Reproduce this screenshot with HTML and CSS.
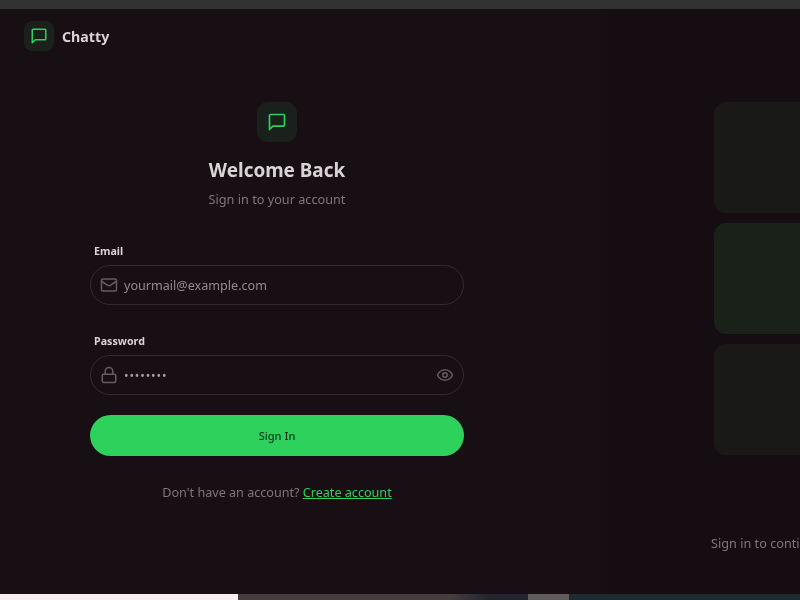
FILE: index.html
```html
<!DOCTYPE html>
<html lang="en">
<head>
  <meta charset="UTF-8">
  <title>Chatty</title>
  <link rel="stylesheet" href="styles.css">
</head>
<body>

  <!-- Browser strip on top -->
  <div class="strip-top"></div>

  <div class="app">
    <!-- Navbar -->
    <div class="navbar">
      <div class="logo-box small">
        <svg class="icon-green" width="18" height="18" viewBox="0 0 24 24"><path d="M21 16a1 1 0 0 1-1 1H7l-4 4V4a1 1 0 0 1 1-1h16a1 1 0 0 1 1 1z"/></svg>
      </div>
      <span class="brand">Chatty</span>
    </div>

    <!-- Login column -->
    <div class="login-col">
      <div class="login-head">
        <div class="logo-box">
          <svg class="icon-green" width="20" height="20" viewBox="0 0 24 24"><path d="M21 16a1 1 0 0 1-1 1H7l-4 4V4a1 1 0 0 1 1-1h16a1 1 0 0 1 1 1z"/></svg>
        </div>
        <h1>Welcome Back</h1>
        <p>Sign in to your account</p>
      </div>

      <form class="login-form">
        <label class="field-label">Email</label>
        <div class="field">
          <svg class="icon-gray" width="18" height="18" viewBox="0 0 24 24"><rect x="2" y="4" width="20" height="16" rx="2"/><path d="m22 7-8.97 5.7a1.94 1.94 0 0 1-2.06 0L2 7"/></svg>
          <span class="field-text">yourmail@example.com</span>
        </div>

        <label class="field-label second">Password</label>
        <div class="field">
          <svg class="icon-gray" width="18" height="18" viewBox="0 0 24 24"><rect x="3" y="11" width="18" height="11" rx="2"/><path d="M7 11V7a5 5 0 0 1 10 0v4"/></svg>
          <span class="field-dots">••••••••</span>
          <svg class="icon-gray eye" width="18" height="18" viewBox="0 0 24 24"><path d="M2 12s3-7 10-7 10 7 10 7-3 7-10 7-10-7-10-7Z"/><circle cx="12" cy="12" r="3"/></svg>
        </div>

        <button class="btn-signin" type="button">Sign In</button>
      </form>

      <p class="signup">Don't have an account? <a href="#">Create account</a></p>
    </div>

    <!-- Right column with the pattern -->
    <div class="side-col">
      <div class="pattern">
        <div class="tile"></div>
        <div class="tile tile-green"></div>
        <div class="tile"></div>
      </div>
      <p class="side-text">Sign in to continue</p>
    </div>
  </div>

  <!-- Browser strip at the bottom -->
  <div class="strip-bottom">
    <div class="seg-white"></div>
    <div class="seg-brown"></div>
    <div class="seg-blue"></div>
    <div class="seg-gray"></div>
    <div class="seg-dark"></div>
  </div>

</body>
</html>
```
FILE: styles.css
```css
html, body {
  height: 100%;
}

body {
  margin: 0;
  font-family: "Noto Sans", "Open Sans", sans-serif;
  background: #170f13;
  display: flex;
  flex-direction: column;
  overflow: hidden;
}

.strip-top {
  height: 9px;
  background: #333232;
}

/* The reference is a soft video frame, hence the slight blur */
.app {
  flex: 1;
  display: flex;
  position: relative;
  min-height: 0;
  background: #170f13;
  filter: blur(0.4px);
}

/* Navbar */
.navbar {
  position: absolute;
  top: 12px;
  left: 24px;
  display: flex;
  align-items: center;
  gap: 8px;
}

.brand {
  font-size: 14.2px;
  font-weight: 700;
  color: #d9d4d6;
}

.logo-box {
  width: 40px;
  height: 40px;
  border-radius: 11px;
  background: #1a201c;
  display: flex;
  align-items: center;
  justify-content: center;
}

.logo-box.small {
  width: 30px;
  height: 30px;
  border-radius: 8px;
}

.icon-green, .icon-gray {
  fill: none;
  stroke-width: 2;
  stroke-linecap: round;
  stroke-linejoin: round;
}

.icon-green {
  stroke: #2dd15c;
}

.icon-gray {
  stroke: #635d60;
  flex: none;
}

/* Login */
.login-col {
  width: 554px;
  flex: none;
  display: flex;
  flex-direction: column;
  align-items: center;
  padding-top: 93px;
  box-sizing: border-box;
}

.login-head {
  display: flex;
  flex-direction: column;
  align-items: center;
}

.login-head h1 {
  margin: 13px 0 0;
  font-size: 18.9px;
  line-height: 30px;
  font-weight: 700;
  color: #d9d4d6;
}

.login-head p {
  margin: 4px 0 0;
  font-size: 12.7px;
  line-height: 20px;
  color: #7d777a;
}

.login-form {
  width: 374px;
  margin-top: 32px;
  display: flex;
  flex-direction: column;
}

.field-label {
  padding-left: 4px;
  margin-bottom: 4px;
  font-size: 10.7px;
  line-height: 20px;
  font-weight: 700;
  color: #d9d4d6;
}

.field-label.second {
  margin-top: 26px;
}

.field {
  height: 40px;
  box-sizing: border-box;
  border: 1px solid #322c2f;
  border-radius: 20px;
  padding: 0 9px;
  display: flex;
  align-items: center;
  gap: 6px;
}

.field-text {
  font-size: 12.6px;
  color: #918b8e;
}

.field-dots {
  font-size: 12px;
  letter-spacing: 0.9px;
  color: #a29c9f;
}

.eye {
  margin-left: auto;
}

.btn-signin {
  margin-top: 20px;
  height: 41px;
  border: none;
  border-radius: 21px;
  background: #2dd15c;
  color: #10331b;
  font-family: inherit;
  font-size: 11.1px;
  font-weight: 500;
}

.signup {
  margin: 27px 0 0;
  font-size: 12.6px;
  line-height: 20px;
  color: #7d777a;
}

.signup a {
  color: #2dd15c;
}

/* Right column */
.side-col {
  flex: none;
  width: 246px;
  overflow: hidden;
  padding: 93px 0 0 160px;
  box-sizing: border-box;
  background: linear-gradient(90deg, #170f13 40px, #150d11 60px);
}

.pattern {
  display: flex;
  flex-direction: column;
  gap: 10px;
  width: 111px;
}

.tile {
  height: 111px;
  border-radius: 12px;
  background: #191a18;
}

.tile-green {
  background: #192119;
}

.side-text {
  margin: 78px 0 0 -3px;
  font-size: 12.7px;
  line-height: 20px;
  color: #7d777a;
  white-space: nowrap;
}

/* Bottom strip */
.strip-bottom {
  height: 6px;
  display: flex;
}

.seg-white {
  width: 238px;
  background: #f5eff1;
}

.seg-brown {
  width: 250px;
  background: linear-gradient(90deg, #443d3e 85%, #22262f);
}

.seg-blue {
  width: 40px;
  background: #22262f;
}

.seg-gray {
  width: 41px;
  background: #605c5e;
}

.seg-dark {
  flex: 1;
  background: #1e2a32;
}
```
